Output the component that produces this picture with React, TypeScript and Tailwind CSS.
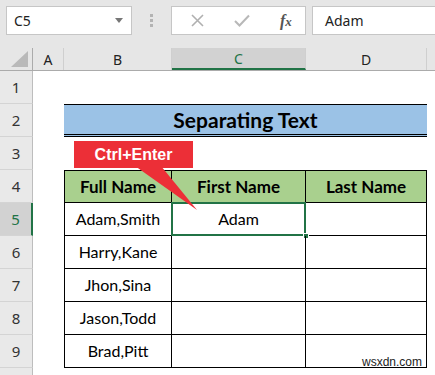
import { useState } from 'react';

const COLS = [
  { key: 'A', w: 'w-[31px]' },
  { key: 'B', w: 'w-[108px]' },
  { key: 'C', w: 'w-[134px]' },
  { key: 'D', w: 'w-[121px]' },
];

const NAMES = ['Adam,Smith', 'Harry,Kane', 'Jhon,Sina', 'Jason,Todd', 'Brad,Pitt'];

const cellFont = { fontFamily: 'Lato, "Open Sans", sans-serif' };
const uiFont = { fontFamily: '"Noto Sans", "Open Sans", sans-serif' };

function RowHead({ n, active }: { n?: number; active?: boolean }) {
  return (
    <div
      className={`w-[33px] h-full shrink-0 flex items-center justify-center text-[15px] border-b border-[#d4d4d4] ${
        active ? 'bg-[#d2d2d2] text-[#217346] border-r-2 border-r-[#217346]' : 'bg-[#e9e9e9] text-[#333] border-r border-r-[#bdbdbd]'
      }`}
      style={uiFont}
    >
      {n}
    </div>
  );
}

function TopBar() {
  return (
    <div className="h-[48px] bg-[#e6e6e6] flex items-start pt-[6px] pl-[6px] gap-0" style={uiFont}>
      <div className="w-[126px] h-[29px] bg-white border border-[#c6c6c6] flex items-center justify-between pl-[7px] pr-[8px]">
        <span className="text-[14px] text-[#222]">C5</span>
        <svg width="8" height="5" viewBox="0 0 8 5">
          <path d="M0 0 L8 0 L4 5 Z" fill="#777" />
        </svg>
      </div>
      <div className="w-[39px] h-[29px] flex flex-col items-center justify-center gap-[2px]">
        <span className="w-[3px] h-[3px] bg-[#b3b3b3]" />
        <span className="w-[3px] h-[3px] bg-[#b3b3b3]" />
        <span className="w-[3px] h-[3px] bg-[#b3b3b3]" />
      </div>
      <div className="w-[135px] h-[29px] bg-white border border-[#c6c6c6] flex items-center">
        <svg className="ml-[19px]" width="13" height="13" viewBox="0 0 13 13">
          <path d="M1 1 L12 12 M12 1 L1 12" stroke="#b0b0b0" strokeWidth="1.6" />
        </svg>
        <svg className="ml-[30px]" width="16" height="13" viewBox="0 0 16 13">
          <path d="M1 7 L5.5 11.5 L15 1.5" stroke="#b8b8b8" strokeWidth="2" fill="none" />
        </svg>
        <span
          className="ml-[30px] text-[16px] italic font-bold text-[#555]"
          style={{ fontFamily: '"Liberation Serif", serif' }}
        >
          f<span className="text-[13px]">x</span>
        </span>
      </div>
      <div className="ml-[6px] flex-1 h-[29px] bg-white border border-[#c6c6c6] border-r-0 flex items-center pl-[12px]">
        <span className="text-[14px] text-[#222]">Adam</span>
      </div>
    </div>
  );
}

function ColHeaders() {
  return (
    <div className="h-[23px] flex bg-[#e6e6e6] border-b border-[#ababab]" style={uiFont}>
      <div className="w-[33px] h-full shrink-0 border-r border-[#ababab] flex items-end justify-end pr-[4px] pb-[3px]">
        <svg width="17" height="16" viewBox="0 0 17 16">
          <path d="M17 0 L17 16 L0 16 Z" fill="#b9b9b9" />
        </svg>
      </div>
      {COLS.map((c) => (
        <div
          key={c.key}
          className={`${c.w} h-full shrink-0 flex items-center justify-center text-[14px] border-r border-[#cfcfcf] ${
            c.key === 'C' ? 'bg-[#d2d2d2] text-[#217346] border-b-2 border-b-[#217346]' : 'text-[#222]'
          }`}
        >
          {c.key}
        </div>
      ))}
      <div className="flex-1" />
    </div>
  );
}

export default function App() {
  const [active] = useState(5);

  return (
    <div className="w-[435px] h-[375px] overflow-hidden bg-white">
      <TopBar />
      <ColHeaders />
      <div className="relative" style={cellFont}>
        {/* row 1 */}
        <div className="h-[33px] flex">
          <RowHead n={1} />
        </div>
        {/* row 2: title */}
        <div className="h-[33px] flex">
          <RowHead n={2} />
          <div className="w-[31px] shrink-0" />
          <div className="w-[363px] shrink-0 bg-[#9bc2e6] border-t border-black border-b-[3px] border-b-black border-double flex items-center justify-center">
            <span className="text-[21px] font-bold text-black">Separating Text</span>
          </div>
        </div>
        {/* row 3 */}
        <div className="h-[33px] flex">
          <RowHead n={3} />
        </div>
        {/* row 4: header */}
        <div className="h-[33px] flex">
          <RowHead n={4} />
          <div className="w-[31px] shrink-0" />
          {['Full Name', 'First Name', 'Last Name'].map((h, i) => (
            <div
              key={h}
              className={`${['w-[108px] border-l', 'w-[134px]', 'w-[121px]'][i]} shrink-0 h-full bg-[#a9d08e] border-t border-r border-b border-black flex items-center justify-center text-[17px] font-bold text-black`}
            >
              {h}
            </div>
          ))}
        </div>
        {NAMES.map((name, i) => {
          const r = i + 5;
          return (
            <div key={name} className="h-[33px] flex">
              <RowHead n={r} active={r === active} />
              <div className="w-[31px] shrink-0" />
              <div className="w-[108px] shrink-0 h-full border-l border-r border-b border-black flex items-center justify-center text-[16px] text-black">
                {name}
              </div>
              <div className="relative w-[134px] shrink-0 h-full border-r border-b border-black flex items-center justify-center text-[16px] text-black">
                {r === 5 && (
                  <>
                    Adam
                    <div className="absolute -left-px -top-px -right-px -bottom-px border-2 border-[#217346]" />
                    <div className="absolute -right-[4px] -bottom-[4px] w-[6px] h-[6px] bg-[#217346] border border-white" />
                  </>
                )}
              </div>
              <div className="w-[121px] shrink-0 h-full border-r border-b border-black" />
            </div>
          );
        })}
        {/* row 10, only its top edge shows */}
        <div className="h-[33px] flex">
          <RowHead />
        </div>

        {/* callout */}
        <div className="absolute left-[74px] top-[70px] w-[130px] h-[72px]">
          <svg className="absolute left-0 top-0" width="130" height="72" viewBox="0 0 130 72">
            <path d="M61 25 L123 69 L87 25 Z" fill="#ec2f37" />
          </svg>
          <div className="absolute left-0 top-0 w-[119px] h-[27px] bg-[#ec2f37] flex items-center justify-center">
            <span className="text-white font-bold text-[16px]" style={{ fontFamily: '"Liberation Sans", Arial, sans-serif' }}>
              Ctrl+Enter
            </span>
          </div>
        </div>

        {/* watermark */}
        <div className="absolute left-[362px] top-[285px] text-[12px] leading-none text-[#222]" style={{ fontFamily: '"Liberation Sans", sans-serif' }}>
          wsxdn.com
        </div>
      </div>
    </div>
  );
}
